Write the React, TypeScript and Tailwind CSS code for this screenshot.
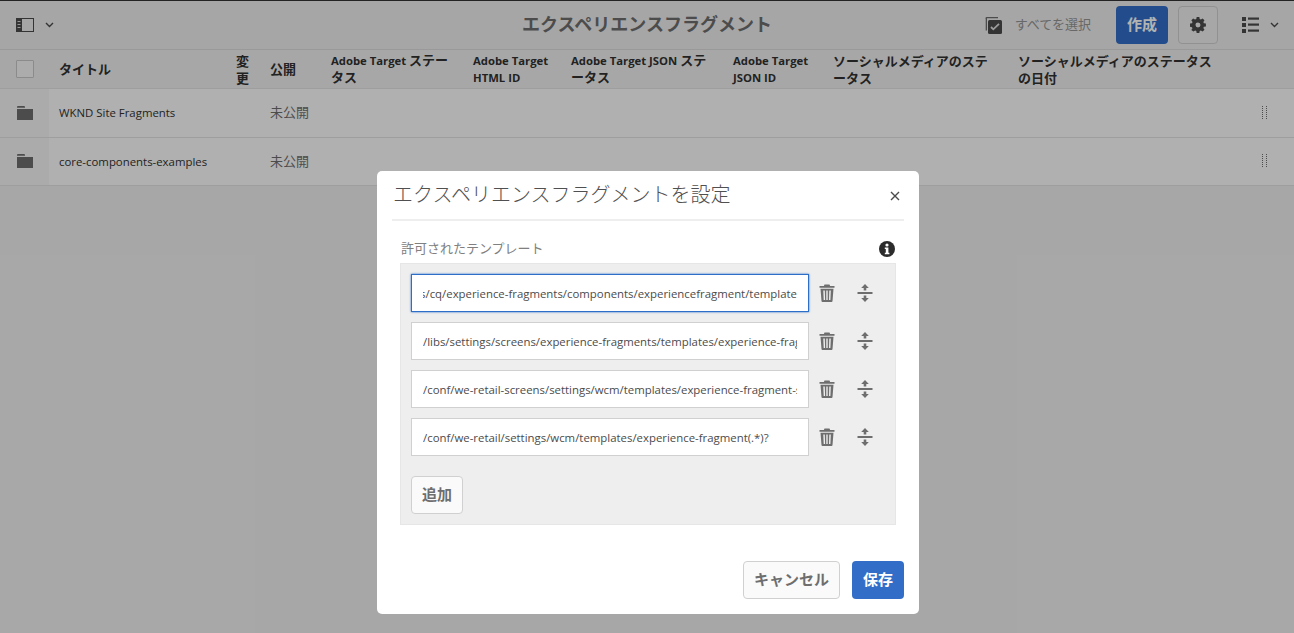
import React from "react";

const font = { fontFamily: '"Open Sans","Noto Sans CJK JP",sans-serif' };

function Chevron({ className = "" }: { className?: string }) {
  return (
    <svg width="9" height="6" viewBox="0 0 9 6" className={className} fill="none" stroke="currentColor" strokeWidth="1.4">
      <path d="M1 1l3.5 3.5L8 1" />
    </svg>
  );
}

function Trash() {
  return (
    <svg width="16" height="18" viewBox="0 0 16 18" fill="#6e6e6e">
      <path d="M5.5 0.5h5l.6 1.500H15.500v1.800H.5V2H4.900z" />
      <path d="M1.500 4.700h13L13.500 17a1 1 0 0 1-1 1h-9a1 1 0 0 1-1-1zM4.300 6.500l.4 9.500h1.400l-.3-9.500zM7.300 6.500V16h1.400V6.500zM10.300 6.500l-.3 9.500h1.400l.4-9.500z" fillRule="evenodd" />
    </svg>
  );
}

function Move() {
  return (
    <svg width="16" height="18" viewBox="0 0 16 18" fill="#6e6e6e">
      <path d="M8 0l3.800 4H9.300v2.600H6.700V4H4.200z" />
      <rect x="0.500" y="8" width="15" height="2" />
      <path d="M8 18l3.800-4H9.300v-2.600H6.700V14H4.200z" />
    </svg>
  );
}

function Folder() {
  return (
    <svg width="16" height="14" viewBox="0 0 16 14" fill="#6e6e6e">
      <path d="M0 1a1 1 0 0 1 1-1h6a1 1 0 0 1 1 1v.8H0z" />
      <path d="M0 3h16v11H0z" />
    </svg>
  );
}

function Grip() {
  return (
    <svg width="6" height="14" viewBox="0 0 6 14" fill="#6e6e6e">
      {[0, 2, 4, 6, 8, 10, 12].map((y) => (
        <g key={y}>
          <rect x="0" y={y} width="1" height="1" />
          <rect x="4" y={y} width="1" height="1" />
        </g>
      ))}
    </svg>
  );
}

function Gear() {
  return (
    <svg width="16" height="16" viewBox="0 0 18 18" fill="#4b4b4b">
      <path
        fillRule="evenodd"
        d="M7.500 0h3l.4 2.300 1.300.6 2-1.300 2.100 2.100-1.300 2 .6 1.300 2.300.4v3.200l-2.300.4-.6 1.300 1.300 2-2.100 2.100-2-1.300-1.300.6-.4 2.300h-3l-.4-2.300-1.300-.6-2 1.300L1.500 14.700l1.300-2-.6-1.300L0 11V7.400l2.300-.4.500-1.300-1.300-2L3.600 1.600l2 1.300 1.500-.6zM9 6.200a2.800 2.800 0 1 0 0 5.600 2.800 2.800 0 0 0 0-5.600z"
      />
    </svg>
  );
}

function Columns() {
  return (
    <svg width="18" height="14" viewBox="0 0 18 14">
      <rect x="0.500" y="0.500" width="17" height="13" fill="none" stroke="#4b4b4b" />
      <rect x="0" y="0" width="6" height="14" fill="#4b4b4b" />
      <path d="M1.500 3.500h3M1.500 6.500h3M1.500 9.500h3" stroke="#d8d8d8" strokeWidth="1" />
    </svg>
  );
}

function ListIcon() {
  return (
    <svg width="17" height="16" viewBox="0 0 17 16" fill="#4b4b4b">
      {[0, 6, 12].map((y) => (
        <g key={y}>
          <rect x="0" y={y} width="4" height="4" />
          <rect x="6" y={y + 0.5} width="11" height="2.200" />
        </g>
      ))}
    </svg>
  );
}

function SelectAll() {
  return (
    <svg width="17" height="17" viewBox="0 0 17 17">
      <path d="M0.700 2v11.500H2V1.300h11V0H2a1.300 1.300 0 0 0-1.300 2z" fill="#6e6e6e" />
      <rect x="3" y="3" width="14" height="14" rx="1.500" fill="#4b4b4b" />
      <path d="M6 10l2.300 2.300L14 6.800" fill="none" stroke="#e0e0e0" strokeWidth="1.800" />
    </svg>
  );
}

function InfoIcon() {
  return (
    <svg width="16" height="16" viewBox="0 0 16 16">
      <circle cx="8" cy="8" r="8" fill="#2c2c2c" />
      <circle cx="8" cy="4" r="1.600" fill="#fff" />
      <path d="M5.800 6.500H9.400v5.200h1v1.500H5.800v-1.500h1V8H5.800z" fill="#fff" />
    </svg>
  );
}

function L({ children }: { children: React.ReactNode }) {
  return <span className="text-[11.3px]">{children}</span>;
}

const headers: { node: React.ReactNode; two?: boolean }[] = [
  { node: <>タイトル</> },
  { node: <>変<br />更</>, two: true },
  { node: <>公開</> },
  { node: <><L>Adobe Target </L>ステー<br />タス</> },
  { node: <><L>Adobe Target</L><br /><L>HTML ID</L></> },
  { node: <><L>Adobe Target JSON </L>ステ<br />ータス</> },
  { node: <><L>Adobe Target</L><br /><L>JSON ID</L></> },
  { node: <>ソーシャルメディアのステ<br />ータス</>, two: true },
  { node: <>ソーシャルメディアのステータス<br />の日付</>, two: true },
];

const gridCols = "grid-cols-[59px_177px_34px_61px_142px_98px_162px_100px_185px_1fr]";

function Row({ name }: { name: string }) {
  return (
    <div className={`grid ${gridCols} h-[48.5px] items-center border-b border-[#e3e3e3] bg-[#fcfcfc] rounded-tl-[3px] text-[13px]`}>
      <div className="h-full w-[49px] flex items-center justify-center bg-[#f5f5f5]">
        <Folder />
      </div>
      <div className="text-[11.4px] text-[#323232] whitespace-nowrap">{name}</div>
      <div />
      <div className="text-[#6e6e6e]">未公開</div>
      <div className="col-span-6 flex justify-end pr-[26px]">
        <Grip />
      </div>
    </div>
  );
}

function TemplateField({ value, focused, end }: { value: string; focused?: boolean; end?: boolean }) {
  return (
    <div className="flex items-center h-[38px]">
      <div
        className={`w-[398px] h-full bg-white px-[11px] pt-[2px] flex items-center border ${
          focused ? "border-[#2d6ec9] shadow-[0_0_2px_#2d6ec9]" : "border-[#d0d0d0]"
        }`}
      >
        <div className={`w-full overflow-hidden flex ${end ? "justify-end" : ""}`}>
          <span className="shrink-0 whitespace-nowrap text-[11.4px] text-[#4b4b4b]">{value}</span>
        </div>
      </div>
      <div className="w-[36px] flex justify-center">
        <Trash />
      </div>
      <div className="w-[40px] flex justify-center">
        <Move />
      </div>
    </div>
  );
}

export default function App() {
  return (
    <div className="relative h-[633px] w-[1294px] overflow-hidden bg-[#f0f0f0]" style={font}>
      <header className="relative flex items-center h-[50px] bg-[#eeeeee] border-b border-[#dcdcdc] border-t border-t-[#333] pl-[16px] pr-[13px]">
        <Columns />
        <Chevron className="ml-[11px] text-[#4b4b4b]" />
        <div className="absolute left-0 right-0 -top-[1px] h-full flex items-center justify-center text-[18px] font-bold text-[#6e6e6e] pointer-events-none">
          エクスペリエンスフラグメント
        </div>
        <div className="ml-auto flex items-center">
          <SelectAll />
          <span className="ml-[13px] text-[13px] text-[#959595]">すべてを選択</span>
          <button className="ml-[25px] h-[38px] w-[52px] pb-[2px] rounded-[4px] bg-[#326ec8] text-white text-[15px] font-bold">作成</button>
          <button className="ml-[10px] h-[38px] w-[40px] rounded-[4px] border border-[#d0d0d0] bg-[#f0f0f0] flex items-center justify-center">
            <Gear />
          </button>
          <span className="ml-[24px]"><ListIcon /></span>
          <Chevron className="ml-[11px] mr-[2px] text-[#4b4b4b]" />
        </div>
      </header>

      <div className={`grid ${gridCols} h-[39px] items-center border-b border-[#e3e3e3] text-[13px] font-bold leading-[17px] text-[#323232]`}>
        <div className="pl-[16px]">
          <div className="h-[18px] w-[18px] border border-[#c8c8c8] bg-[#f6f6f6] rounded-[1px]" />
        </div>
        {headers.map((h, i) => (
          <div key={i} className={`whitespace-nowrap ${h.two ? "pt-[2px]" : ""}`}>{h.node}</div>
        ))}
      </div>

      <Row name="WKND Site Fragments" />
      <Row name="core-components-examples" />

      <div className="absolute inset-0 bg-black/30" />

      <div className="absolute left-[377px] top-[171px] w-[542px] h-[443px] bg-white rounded-[5px] px-[15px]">
        <div className="flex items-center justify-between h-[50px] border-b-2 border-[#eeeeee] pl-[1px] pr-[4px]">
          <h2 className="text-[20px] font-light text-[#505050]">エクスペリエンスフラグメントを設定</h2>
          <svg width="10" height="10" viewBox="0 0 10 10" fill="none" stroke="#4b4b4b" strokeWidth="1.400" className="mt-[2px]">
            <path d="M1 1l8 8M9 1l-8 8" />
          </svg>
        </div>

        <div className="flex items-center justify-between h-[16px] mt-[20px] pl-[9px] pr-[9px]">
          <span className="text-[13px] text-[#808080]">許可されたテンプレート</span>
          <InfoIcon />
        </div>

        <div className="mt-[6px] ml-[8px] w-[496px] h-[262px] bg-[#eeeeee] border border-[#e6e6e6] pt-[10px] px-[10px]">
          <div className="flex flex-col gap-[10px]">
            <TemplateField focused end value="/libs/cq/experience-fragments/components/experiencefragment/template" />
            <TemplateField value="/libs/settings/screens/experience-fragments/templates/experience-fragment-screens-variation" />
            <TemplateField value="/conf/we-retail-screens/settings/wcm/templates/experience-fragment-screens-variation" />
            <TemplateField value="/conf/we-retail/settings/wcm/templates/experience-fragment(.*)?" />
          </div>
          <button className="mt-[20px] h-[38px] w-[52px] pb-[2px] rounded-[4px] border border-[#d0d0d0] bg-[#fafafa] text-[15px] font-bold text-[#6e6e6e]">追加</button>
        </div>

        <div className="flex justify-end gap-[12px] mt-[36px]">
          <button className="h-[38px] w-[97px] pb-[2px] rounded-[4px] border border-[#d0d0d0] bg-[#fafafa] text-[15px] font-bold text-[#6e6e6e]">キャンセル</button>
          <button className="h-[38px] w-[52px] pb-[2px] rounded-[4px] bg-[#326ec8] text-[15px] font-bold text-white">保存</button>
        </div>
      </div>
    </div>
  );
}
